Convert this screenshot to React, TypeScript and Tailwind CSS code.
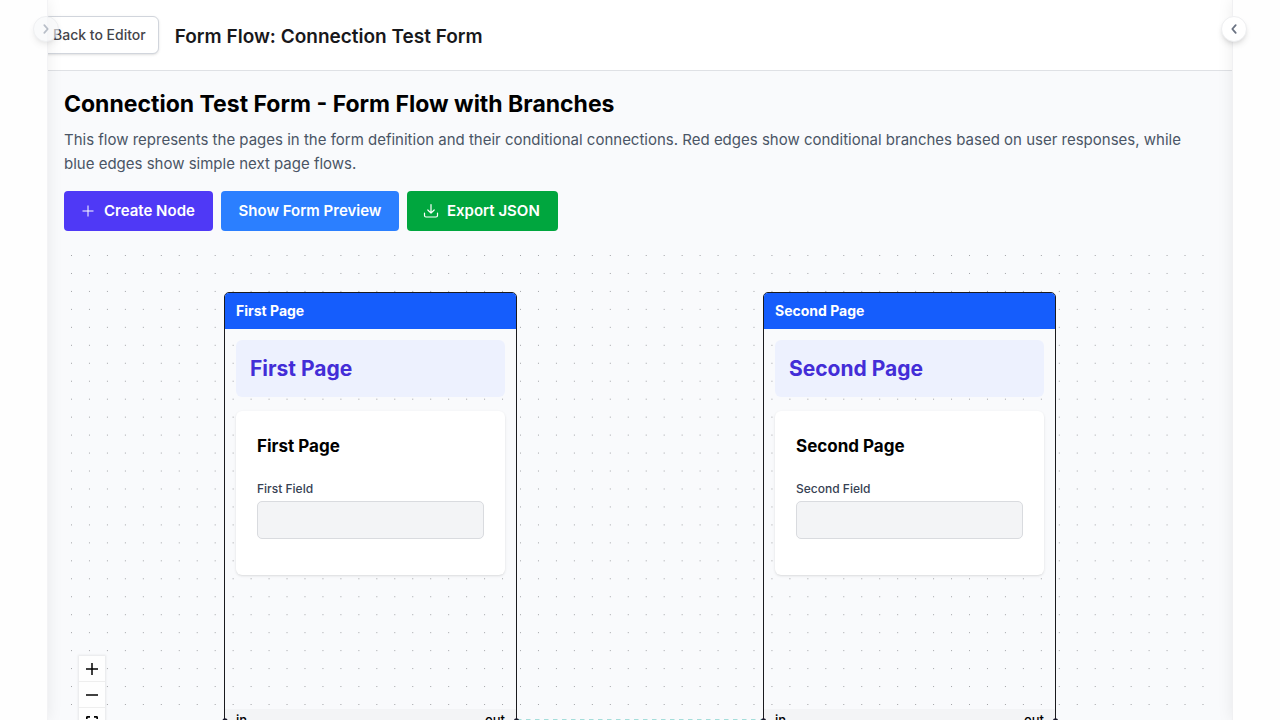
import React from "react";
import { ArrowLeft } from "lucide-react";

type FlowPage = { id: string; title: string; field: string; place: string };

const pages: FlowPage[] = [
  { id: "first", title: "First Page", field: "First Field", place: "left-40" },
  { id: "second", title: "Second Page", field: "Second Field", place: "left-[699px]" },
];

function Chevron({ left = false }: { left?: boolean }) {
  return (
    <svg viewBox="0 0 16 16" className="size-4" fill="none" stroke="currentColor" strokeWidth="1.8" strokeLinecap="round" strokeLinejoin="round" aria-hidden="true">
      <path d={left ? "M9.7 4.2 6.3 8l3.4 3.8" : "M6.3 4.2 9.7 8l-3.4 3.8"} />
    </svg>
  );
}

function PageNode({ page }: { page: FlowPage }) {
  return (
    <article className={`absolute top-[45px] ${page.place} flex h-[446px] w-[293px] flex-col rounded-[5px] border border-[#1a1a1e]`}>
      <h3 className="h-9 shrink-0 rounded-t-[4px] bg-[#155dfc] px-[11px] text-sm leading-9 font-bold text-white">{page.title}</h3>
      <div className="flex flex-1 flex-col gap-3.5 p-[11px]">
        <div className="rounded-md bg-[#edf1fe] px-3.5 py-3.5 text-[21px] leading-[29px] font-bold text-[#432dd7]">{page.title}</div>
        <div className="rounded-md bg-white px-[21px] pt-[22px] pb-9 shadow-sm">
          <h4 className="text-[17px] leading-[26px] font-bold text-black">{page.title}</h4>
          <label htmlFor={page.id} className="mt-[22px] block text-xs leading-4 font-medium text-[#364153]">{page.field}</label>
          <input id={page.id} type="text" disabled className="mt-1 block h-[38px] w-full rounded-[5px] border border-[#d9dbdf] bg-[#f3f4f6]" />
        </div>
      </div>
      <footer className="flex justify-between bg-[#f3f4f6] px-[11px] pb-1.5 text-[13px] leading-[22px] font-medium text-black">
        <span>in</span>
        <span>out</span>
      </footer>
    </article>
  );
}

function Canvas() {
  return (
    <section aria-label="Flow canvas" className="relative mt-4 h-[528px] overflow-hidden">
      <svg className="absolute inset-0 h-full w-full" aria-hidden="true">
        <defs>
          <pattern id="dots" x="7" y="8" width="17.96" height="17.96" patternUnits="userSpaceOnUse">
            <circle cx="0.5" cy="0.5" r="0.5" fill="#85868a" />
          </pattern>
        </defs>
        <rect width="100%" height="100%" fill="url(#dots)" />
      </svg>
      {pages.map((page) => (
        <PageNode key={page.id} page={page} />
      ))}
      <svg className="absolute inset-0 h-full w-full" aria-hidden="true">
        <path d="M453 472.5H700" stroke="#a5dedb" strokeWidth="1" strokeDasharray="4.5 4.5" />
        <g fill="#1a192b">
          <circle cx="161" cy="474" r="2.7" />
          <circle cx="452.5" cy="474" r="2.7" />
          <circle cx="699.5" cy="474" r="2.7" />
          <circle cx="991.5" cy="474" r="2.7" />
        </g>
      </svg>
      <div className="absolute bottom-[15px] left-[15px] flex flex-col divide-y divide-[#eeeeee] bg-[#fefefe] text-black shadow-[0_0_2px_1px_rgba(0,0,0,0.08)]">
        <button type="button" aria-label="Zoom in" className="flex h-[26px] w-[26px] items-center justify-center">
          <svg viewBox="0 0 12 12" className="size-3" stroke="currentColor" strokeWidth="1.5"><path d="M0 6h12M6 0v12" /></svg>
        </button>
        <button type="button" aria-label="Zoom out" className="flex h-[26px] w-[26px] items-center justify-center">
          <svg viewBox="0 0 12 12" className="size-3" stroke="currentColor" strokeWidth="1.5"><path d="M0 6h12" /></svg>
        </button>
        <button type="button" aria-label="Fit view" className="flex h-[26px] w-[26px] items-center justify-center">
          <svg viewBox="0 0 12 12" className="size-3" fill="none" stroke="currentColor" strokeWidth="1.7"><path d="M.8 4V2.4Q.8 1.8 1.4 1.8H4M8 1.8h2.6q.6 0 .6.6V4M11.2 8v1.6q0 .6-.6.6H8M4 10.2H1.4q-.6 0-.6-.6V8" /></svg>
        </button>
        <button type="button" aria-label="Toggle interactivity" className="flex h-[26px] w-[26px] items-center justify-center">
          <svg viewBox="0 0 12 12" className="size-3" fill="currentColor"><path d="M2 5h8v7H2z" /><path d="M4 5V3a2 2 0 0 1 4 0v2" fill="none" stroke="currentColor" /></svg>
        </button>
      </div>
    </section>
  );
}

export default function App() {
  return (
    <div className="relative h-screen overflow-hidden bg-[#f9fafc] font-['Inter',sans-serif]">
      <header className="flex items-end gap-4 border-b border-[#dfe1e5] bg-white p-4">
        <button type="button" className="flex items-center gap-2 rounded-md border border-[#d1d5dc] bg-white px-3 py-2 text-sm leading-5 font-medium text-[#45454b] shadow-sm">
          <ArrowLeft className="size-4" />
          Back to Editor
        </button>
        <h1 className="text-[19px] leading-[34px] font-semibold text-[#18181b]">Form Flow: Connection Test Form</h1>
      </header>

      <main className="px-16 pt-4">
        <h2 className="text-[23px] leading-[34px] font-bold text-black">Connection Test Form - Form Flow with Branches</h2>
        <p className="mt-[7px] pr-3 text-[15px] leading-6 text-[#4a5565]">
          This flow represents the pages in the form definition and their conditional connections. Red edges show conditional branches based on user responses, while blue edges show simple next page flows.
        </p>
        <div className="mt-[15px] flex gap-2 text-[15px] leading-6 font-semibold text-white">
          <button type="button" className="flex min-w-[149px] items-center gap-2 rounded bg-[#4f39f6] px-4 py-2">
            <svg viewBox="0 0 16 16" className="size-4" fill="none" stroke="currentColor" strokeWidth="1" aria-hidden="true"><path d="M8 2.5v11M2.5 8h11" /></svg>
            Create Node
          </button>
          <button type="button" className="min-w-[178px] rounded bg-[#2b7fff] px-4 py-2">Show Form Preview</button>
          <button type="button" className="flex min-w-[151px] items-center gap-2 rounded bg-[#00a63e] px-4 py-2">
            <svg viewBox="0 0 16 16" className="size-4" fill="none" stroke="currentColor" strokeWidth="1.2" strokeLinecap="round" strokeLinejoin="round" aria-hidden="true"><path d="M8 1.5v8.5M4.8 7 8 10.2 11.2 7M1.5 10v2.5q0 1.5 1.5 1.5h10q1.5 0 1.5-1.5V10" /></svg>
            Export JSON
          </button>
        </div>
        <Canvas />
      </main>

      <aside className="absolute inset-y-0 left-0 w-12 border-r border-[#f3f3f5] bg-[#fefefe] shadow-[0_0_16px_rgba(0,0,0,0.08)]">
        <button type="button" aria-label="Expand left panel" className="absolute top-4 -right-3 flex size-[26px] items-center justify-center rounded-full border border-[#e5e7eb] bg-[#f7f8fa] text-[#8b95a5] opacity-60 shadow-md">
          <Chevron />
        </button>
      </aside>
      <aside className="absolute inset-y-0 right-0 w-12 border-l border-[#f0f0f2] bg-[#fefefe] shadow-[0_0_16px_rgba(0,0,0,0.08)]">
        <button type="button" aria-label="Expand right panel" className="absolute top-4 -left-3 flex size-[26px] items-center justify-center rounded-full border border-[#eeeff1] bg-white text-[#6a7282] shadow-md">
          <Chevron left />
        </button>
      </aside>
    </div>
  );
}
